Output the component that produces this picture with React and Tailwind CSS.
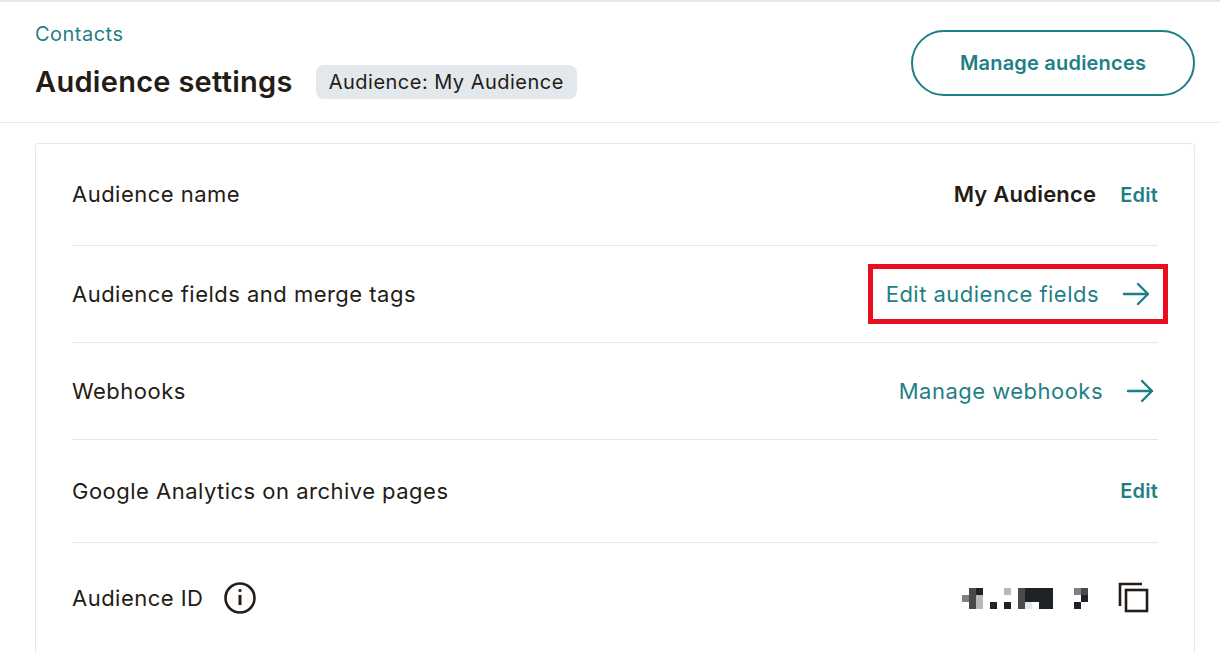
const Arrow = () => (
  <svg width="30" height="24" viewBox="0 0 30 24" fill="none" stroke="#1f7f86" strokeWidth="2.4" strokeLinecap="round" strokeLinejoin="round">
    <path d="M3 12h24M17 2l10 10-10 10" />
  </svg>
);
const px = [
  [0, 0, "#808080", 7, 7], [7, -7, "#4a4a4e", 7, 21], [14, -7, "#1f2226", 7, 7], [14, 0, "#b8b8b8", 7, 14],
  [28, 7, "#1f2226", 7, 7], [42, -7, "#b8b8b8", 7, 7], [42, 7, "#1f2226", 7, 7],
  [56, -7, "#4a4a4e", 7, 21], [63, -7, "#1f2226", 14, 7], [63, 0, "#1f2226", 7, 7], [63, 7, "#e6e6e6", 7, 7],
  [70, 0, "#1f2226", 7, 7], [77, -7, "#1f2226", 14, 21], [112, -7, "#808080", 7, 7], [119, -7, "#4a4a4e", 7, 7], [119, 0, "#1f2226", 7, 7], [112, 7, "#1f2226", 7, 7],
];
export default function App() {
  const label = "text-[22px] text-[#241c15]";
  const row = "flex items-center justify-between border-b border-[#e5e8ea] mx-[36px]";
  return (
    <div className="w-[1220px] h-[655px] bg-white overflow-hidden border-t-2 border-[#e5e8ea] tracking-[0.03em]" style={{ fontFamily: "Inter, 'Open Sans', sans-serif" }}>
      <div className="flex items-center justify-between pl-[35px] pr-[25px] h-[121px] border-b border-[#e5e8ea]">
        <div className="-mt-[2px]">
          <div className="text-[20px] text-[#1f7f86] leading-[28px] mt-[2px]">Contacts</div>
          <div className="flex items-center gap-[23px] mt-[12px]">
            <h1 className="text-[29px] font-semibold text-[#241c15] tracking-[0.01em]">Audience settings</h1>
            <span className="bg-[#e2e8ec] rounded-[8px] px-[13px] h-[34px] flex items-center text-[20px] text-[#241c15]">Audience: My Audience</span>
          </div>
        </div>
        <button className="w-[284px] h-[66px] rounded-full border-2 border-[#1f7f86] text-[#1f7f86] text-[20px] font-semibold tracking-[0.01em] mt-[2px]">Manage audiences</button>
      </div>
      <div className="ml-[35px] mr-[25px] mt-[20px] border border-b-0 border-[#e5e8ea] rounded-t-[4px]">
        <div className={row + " h-[102px]"}>
          <span className={label}>Audience name</span>
          <div className="flex items-center gap-[24px]">
            <span className="text-[22px] font-semibold text-[#241c15] tracking-[0.01em]">My Audience</span>
            <span className="text-[20px] font-semibold text-[#1f7f86] tracking-[0.01em]">Edit</span>
          </div>
        </div>
        <div className={row + " h-[97px]"}>
          <span className={label}>Audience fields and merge tags</span>
          <div className="flex items-center gap-[22px] border-[5px] border-[#e8101f] h-[60px] pl-[13px] pr-[12px] -mr-[10px]">
            <span className="text-[22px] text-[#1f7f86]">Edit audience fields</span><Arrow />
          </div>
        </div>
        <div className={row + " h-[97px]"}>
          <span className={label}>Webhooks</span>
          <div className="flex items-center gap-[22px] pr-[3px]">
            <span className="text-[22px] text-[#1f7f86]">Manage webhooks</span><Arrow />
          </div>
        </div>
        <div className={row + " h-[103px]"}>
          <span className={label}>Google Analytics on archive pages</span>
          <span className="text-[20px] font-semibold text-[#1f7f86] tracking-[0.01em]">Edit</span>
        </div>
        <div className="flex items-center justify-between mx-[36px] h-[110px]">
          <div className="flex items-center gap-[20px]">
            <span className={label}>Audience ID</span>
            <svg width="34" height="34" viewBox="0 0 34 34" fill="none" stroke="#241c15" strokeWidth="2.6">
              <circle cx="17" cy="17" r="14.5" />
              <path d="M17 14v10" strokeWidth="3" />
              <circle cx="17" cy="9.5" r="1.6" fill="#241c15" stroke="none" />
            </svg>
          </div>
          <div className="flex items-center gap-[30px] mr-[8px]">
            <div className="relative w-[126px] h-[21px]">
              {px.map(([x, y, c, w, h], i) => (
                <div key={i} className="absolute" style={{ left: x, top: y + 7, width: w, height: h, background: c }} />
              ))}
            </div>
            <svg width="32" height="32" viewBox="0 0 32 32" fill="none" stroke="#241c15" strokeWidth="2.6">
              <path d="M2 24V2h22" />
              <rect x="8" y="8" width="21" height="21" />
            </svg>
          </div>
        </div>
      </div>
    </div>
  );
}
